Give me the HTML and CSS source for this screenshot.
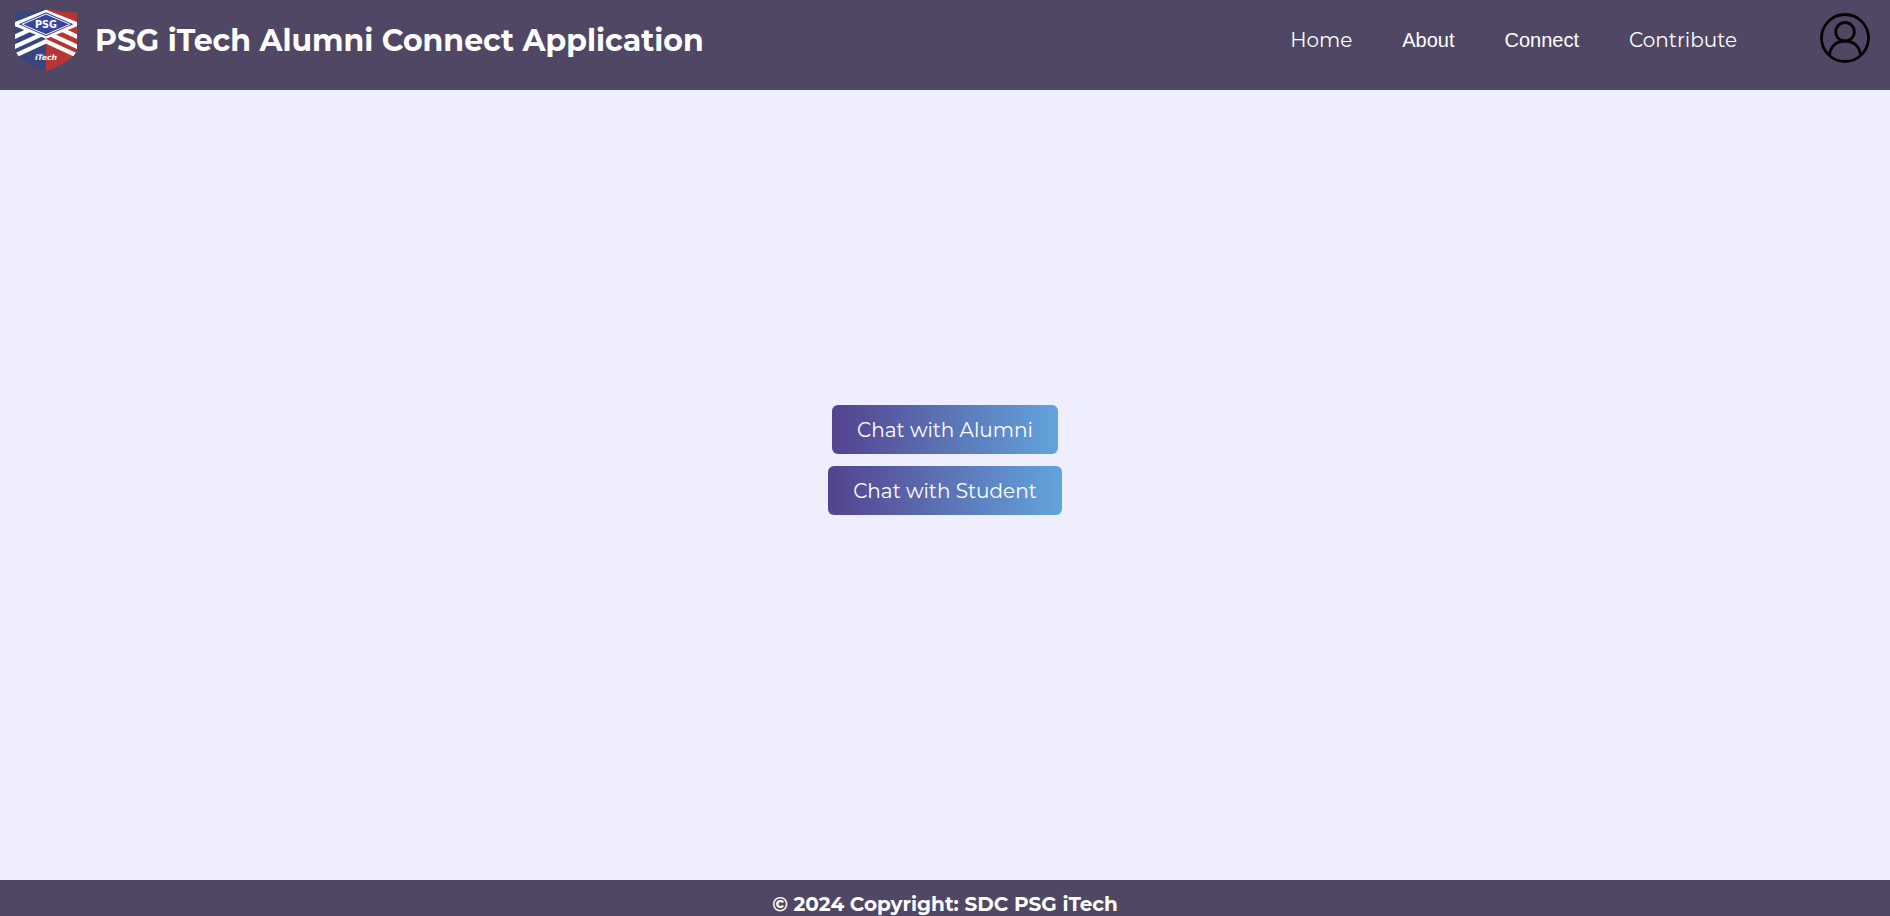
FILE: index.html
```html
<!DOCTYPE html>
<html lang="en">
<head>
<meta charset="utf-8">
<meta name="viewport" content="width=device-width, initial-scale=1">
<title>PSG iTech Alumni Connect Application</title>
<link rel="stylesheet" href="styles.css">
</head>
<body>
<header class="header">
  <svg class="logo" viewBox="45 27 186 186" role="img" aria-label="PSG iTech">
    <clipPath id="shield"><path d="M45 38Q95 35 138 27Q181 35 231 38V150Q220 184 138 213Q56 184 45 150Z"/></clipPath>
    <g clip-path="url(#shield)">
      <path fill="#38467f" d="M45 27h93v186H45z"/>
      <path fill="#b83535" d="M138 27h93v186h-93z"/>
      <path fill="none" stroke="#fff" stroke-width="13" d="M40 112L138 67L236 112M40 142L138 97L236 142M40 169L138 124L236 169"/>
      <path fill="#fff" d="M45 66L138 29L231 66V79L138 116L45 79Z"/>
      <path fill="#38439a" d="M56 73L138 37L220 73L138 109Z"/>
      <path fill="none" stroke="#fff" stroke-width="3" d="M66 73L138 42L210 73L138 104Z"/>
    </g>
    <text class="logo-name" x="138" y="84" text-anchor="middle">PSG</text>
    <text class="logo-sub" x="138" y="181" text-anchor="middle">iTech</text>
  </svg>
  <h1 class="title">PSG iTech Alumni Connect Application</h1>
  <nav class="nav">
    <a class="nav-link" href="#home">Home</a>
    <button class="nav-button" type="button">About</button>
    <button class="nav-button" type="button">Connect</button>
    <a class="nav-link" href="#contribute">Contribute</a>
  </nav>
  <button class="profile" type="button" aria-label="Profile">
    <svg class="profile-icon" viewBox="0 0 50 50" fill="none" stroke="#000" stroke-width="2.8">
      <circle cx="25" cy="25" r="23.5"/>
      <circle cx="25" cy="18.800" r="9.300"/>
      <path d="M9.500 42.500C10 34 16 28 25 28S40 34 40.500 42.500"/>
    </svg>
  </button>
</header>
<main class="main">
  <button class="chat" type="button">Chat with Alumni</button>
  <button class="chat" type="button">Chat with Student</button>
</main>
<footer class="footer">© 2024 Copyright: SDC PSG iTech</footer>
</body>
</html>
```
FILE: styles.css
```css
* {
  box-sizing: border-box;
}

body {
  margin: 0;
  min-height: 100vh;
  display: flex;
  flex-direction: column;
  background: #efeeff;
  color: #fff;
  font-family: Montserrat, Inter, sans-serif;
}

button {
  border: 0;
  padding: 0;
  background: none;
  color: inherit;
  cursor: pointer;
}

.header {
  display: flex;
  align-items: flex-start;
  padding: 9px 20px 19px 15px;
  background: #504764;
}

.logo {
  width: 62px;
  height: 62px;
}

.logo-name {
  fill: #fff;
  font: bold 29px "DejaVu Sans", sans-serif;
}

.logo-sub {
  fill: #fff;
  font: italic bold 23px "DejaVu Sans", sans-serif;
}

.title {
  margin: 12px 0 0 18px;
  font-size: 30px;
  line-height: 40px;
  font-weight: 700;
}

.nav {
  display: flex;
  align-items: center;
  gap: 50px;
  margin: 19px 83px 0 auto;
  line-height: 24px;
}

.nav-link {
  color: #fff;
  font-size: 20px;
  text-decoration: none;
}

.nav-button {
  font-family: "Liberation Sans", Arial, sans-serif;
  font-size: 20px;
  line-height: 24px;
}

.profile {
  margin-top: 4px;
}

.profile-icon {
  display: block;
  width: 50px;
  height: 50px;
}

.main {
  flex: 1;
  display: flex;
  flex-direction: column;
  align-items: center;
  justify-content: center;
  gap: 12px;
  padding-bottom: 50px;
}

.chat {
  padding: 13px 25px 12px;
  border-radius: 6px;
  background: linear-gradient(to right, #54428e, #62a4dc);
  font-family: inherit;
  font-size: 20px;
  line-height: 24px;
}

.footer {
  padding: 12px 0 0;
  background: #504764;
  font-size: 20px;
  line-height: 24px;
  font-weight: 700;
  text-align: center;
}
```
